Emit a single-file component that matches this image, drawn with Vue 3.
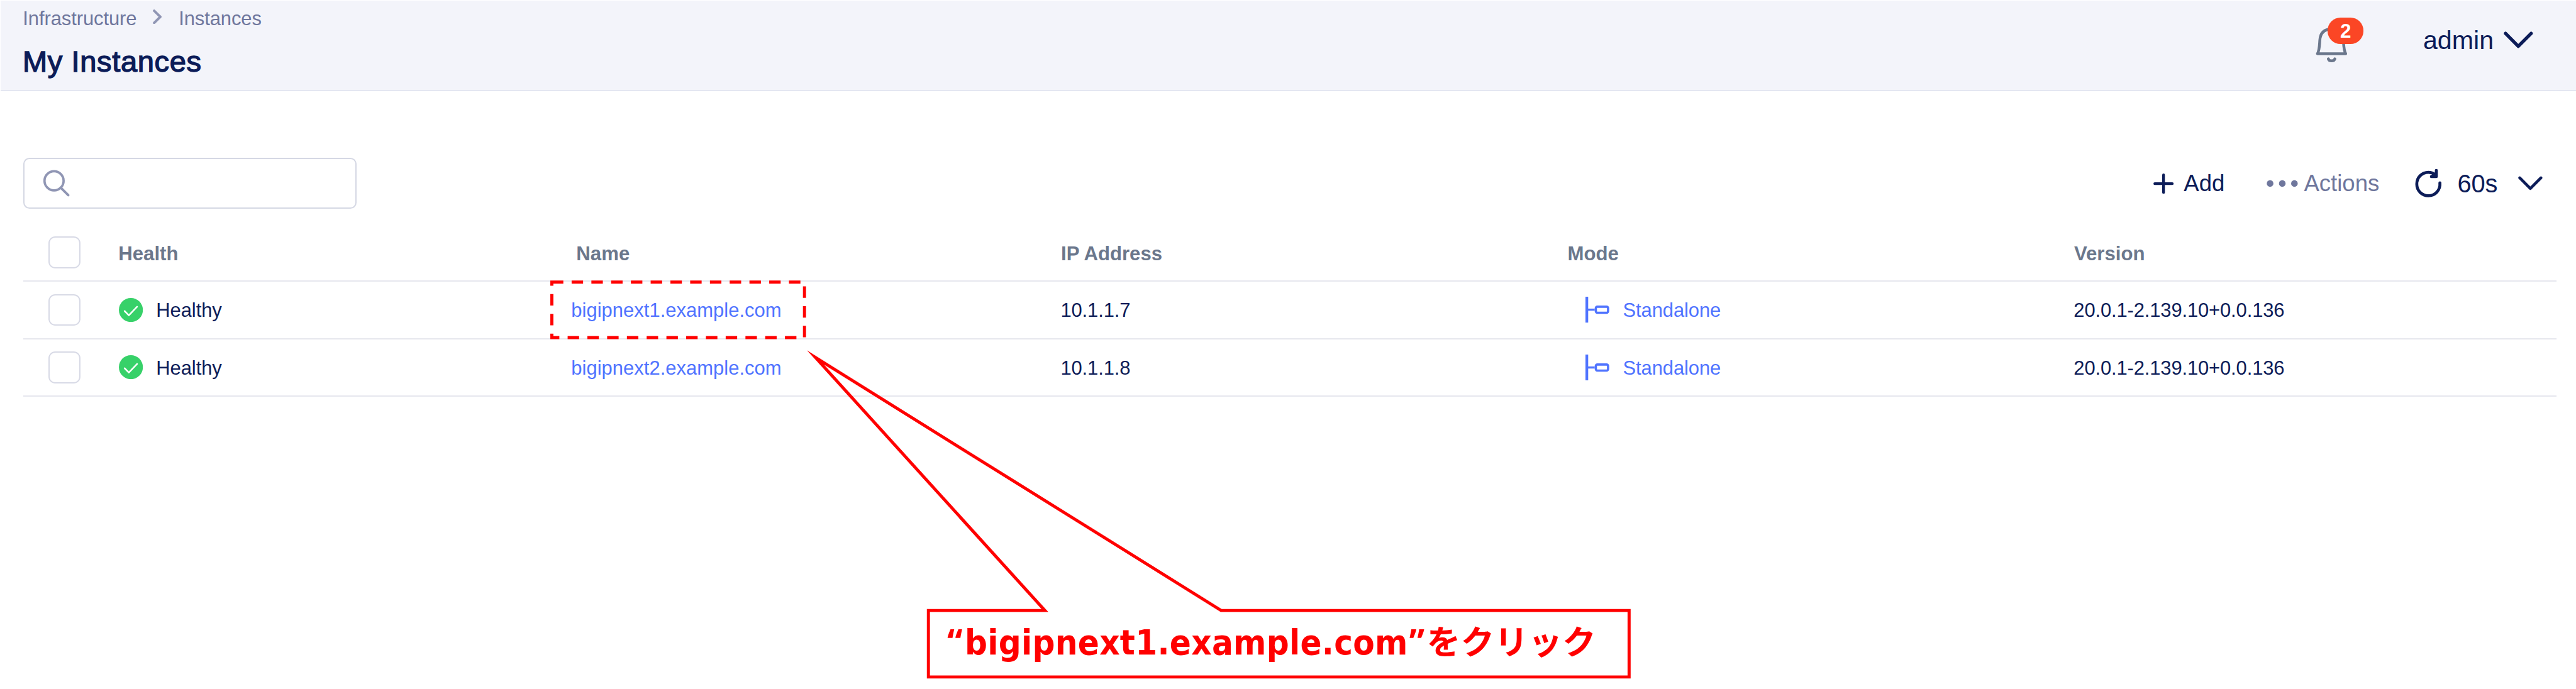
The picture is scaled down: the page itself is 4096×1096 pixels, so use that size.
<script setup>
const rows = [
  { health: 'Healthy', name: 'bigipnext1.example.com', ip: '10.1.1.7', mode: 'Standalone', version: '20.0.1-2.139.10+0.0.136' },
  { health: 'Healthy', name: 'bigipnext2.example.com', ip: '10.1.1.8', mode: 'Standalone', version: '20.0.1-2.139.10+0.0.136' }
]
</script>

<template>
  <div class="page">
    <header class="header">
      <div class="heading">
        <nav class="crumbs">
          <span class="crumb first">Infrastructure</span>
          <svg class="crumb-sep" width="15" height="24" viewBox="0 0 15 24">
            <path d="M2.2 2.2 L12.2 12 L2.2 21.8" fill="none" stroke="#9096b4" stroke-width="4" stroke-linecap="round" stroke-linejoin="round" />
          </svg>
          <span class="crumb">Instances</span>
        </nav>
        <h1 class="title">My Instances</h1>
      </div>
      <div class="bell">
        <svg width="52" height="60" viewBox="0 0 52 60" fill="none" stroke="#6b778c" stroke-width="4.6">
          <path d="M3 43.3 H48.8 C45.6 38 45.6 30 45 21.5 C44.2 9 37 3.3 25.9 3.3 C14.8 3.3 7.6 9 6.8 21.5 C6.2 30 6.2 38 3 43.3 Z" stroke-linejoin="round" />
          <path d="M20.6 51.6 C21.8 56 30 56 31.2 51.6" stroke-linecap="round" />
        </svg>
        <span class="badge">2</span>
      </div>
      <div class="user">
        <span class="user-name">admin</span>
        <svg width="48" height="28" viewBox="0 0 48 28">
          <path d="M3 3.2 L23.7 24.2 L44.6 3.2" fill="none" stroke="#0c1c58" stroke-width="5.4" stroke-linecap="round" stroke-linejoin="round" />
        </svg>
      </div>
    </header>

    <main class="content">
      <div class="toolbar">
        <div class="search">
          <svg width="43" height="44" viewBox="0 0 43 44" fill="none" stroke="#9096b4" stroke-width="3.8">
            <circle cx="17.3" cy="18" r="15.5" />
            <path d="M28.5 29.5 L40.3 41.2" stroke-width="4" stroke-linecap="round" />
          </svg>
        </div>
        <div class="tools">
          <svg class="plus" width="33" height="33" viewBox="0 0 33 33">
            <path d="M16.5 2.3 V30.7 M2.3 16.5 H30.7" stroke="#0c1c58" stroke-width="4.4" stroke-linecap="round" />
          </svg>
          <span class="add">Add</span>
          <svg class="dots" width="51" height="12" viewBox="0 0 51 12" fill="#6f779d">
            <circle cx="5.7" cy="6" r="5.4" /><circle cx="25.5" cy="6" r="5.4" /><circle cx="45.2" cy="6" r="5.4" />
          </svg>
          <span class="actions">Actions</span>
          <svg class="refresh" width="44" height="50" viewBox="0 0 44 50" fill="none" stroke="#0c1c58" stroke-width="4.8" stroke-linecap="round" stroke-linejoin="round">
            <path d="M40.4 24.3 C41.5 36 33 45.3 21.8 45.3 C11 45.3 2.9 37 2.9 26.3 C2.9 15.6 11 7.3 21.8 7.3 C26 7.3 29.6 8.7 32.6 11" />
            <path d="M34.6 4.3 V14.2 H26.6 L32.6 11" />
          </svg>
          <span class="interval">60s</span>
          <svg width="40" height="24" viewBox="0 0 40 24">
            <path d="M2.6 3 L19.8 20.2 L37 3" fill="none" stroke="#0c1c58" stroke-width="4.6" stroke-linecap="round" stroke-linejoin="round" />
          </svg>
        </div>
      </div>

      <div class="table">
        <div class="row head">
          <span class="cell check"><i class="box"></i></span>
          <span class="cell"><b>Health</b></span>
          <span class="cell head-name"><b>Name</b></span>
          <span class="cell"><b>IP Address</b></span>
          <span class="cell"><b>Mode</b></span>
          <span class="cell"><b>Version</b></span>
        </div>
        <div v-for="row in rows" :key="row.name" class="row">
          <span class="cell check"><i class="box"></i></span>
          <span class="cell health">
            <svg width="39" height="39" viewBox="0 0 39 39">
              <circle cx="19.5" cy="19.5" r="19.5" fill="#37d169" />
              <path d="M9.3 21.2 L16.2 28.2 L29.6 14.2" fill="none" stroke="#fff" stroke-width="2.6" stroke-linecap="round" stroke-linejoin="round" />
            </svg>
            <span class="text">{{ row.health }}</span>
          </span>
          <span class="cell"><a class="text link name">{{ row.name }}</a></span>
          <span class="cell"><span class="text">{{ row.ip }}</span></span>
          <span class="cell mode">
            <svg width="39" height="42" viewBox="0 0 39 42" fill="none" stroke="#4f73ff">
              <path d="M2.2 0 V42" stroke-width="4.4" />
              <path d="M4 21 H15" stroke-width="3.4" />
              <rect x="16.8" y="16.2" width="19.9" height="9.8" rx="2.4" stroke-width="3.7" />
            </svg>
            <a class="text link">{{ row.mode }}</a>
          </span>
          <span class="cell"><span class="text version">{{ row.version }}</span></span>
        </div>
      </div>
    </main>

    <svg class="annotation" width="4180" height="1118" viewBox="0 0 4180 1118" fill="none" stroke="#f00" stroke-width="5">
      <path d="M895.5 458 H1305.4 V548 H895.5 Z" stroke-dasharray="18.6 13.46" />
      <path d="M1506.5 991 H1695.5 L1323.3 580.4 L1981.5 991 H2643.5 V1099 H1506.5 Z" stroke-miterlimit="10" />
      <text class="note" x="1537" y="1062.7" fill="#f00" stroke="none"><tspan class="quote">“</tspan><tspan class="latin" dx="3.5">bigipnext1.example.com</tspan><tspan class="quote" dx="2">”</tspan><tspan class="kana" dx="3.5">をクリック</tspan></text>
    </svg>
  </div>
</template>

<style>
body {
  background: #fff;
}
</style>

<style scoped>
.page {
  position: relative;
  box-sizing: border-box;
  width: 4180px;
  height: 1118px;
  padding: 1px 0 0 1px;
  overflow: hidden;
  zoom: 0.979904;
  background: #fff;
  color: #0c1c58;
  font-family: "Liberation Sans", Arial, sans-serif;
  font-size: 31.6px;
  white-space: nowrap;
}

svg {
  display: block;
  flex: none;
}

.header {
  display: flex;
  box-sizing: border-box;
  height: 147px;
  background: #f3f4fa;
  border-bottom: 3px solid #e4e6f1;
}

.heading {
  flex: 1;
  padding: 9px 0 0 36px;
}

.crumbs {
  display: flex;
  height: 40px;
  line-height: 40px;
  color: #6f779d;
  letter-spacing: -0.08px;
}

.crumb.first {
  width: 211px;
}

.crumb-sep {
  margin: 5px 27px 0 0;
}

.title {
  margin: 20px 0 0 -0.3px;
  font-size: 48px;
  line-height: 60px;
  font-weight: 400;
  letter-spacing: 0.65px;
  -webkit-text-stroke: 1.4px #0c1c58;
}

.bell {
  position: relative;
  width: 174px;
  padding-top: 43px;
}

.badge {
  position: absolute;
  left: 19px;
  top: 28px;
  width: 58.5px;
  height: 42px;
  border-radius: 21px;
  background: #fb4625;
  color: #fff;
  font-size: 32px;
  font-weight: 700;
  line-height: 44px;
  text-align: center;
}

.user {
  display: flex;
  height: 129px;
  align-items: center;
  width: 248px;
}

.user-name {
  width: 131px;
  padding-top: 1px;
  font-size: 42px;
  line-height: 50px;
}

.content {
  padding: 108.3px 32px 0 36.5px;
}

.toolbar {
  display: flex;
  height: 83px;
  justify-content: space-between;
}

.search {
  display: flex;
  box-sizing: border-box;
  width: 541.5px;
  padding-left: 30.5px;
  align-items: center;
  border: 2.1px solid #d5d8e4;
  border-radius: 10px;
}

.tools {
  display: flex;
  align-items: center;
  padding-right: 21.5px;
  font-size: 37.3px;
}

.plus {
  margin-right: 16px;
}

.add {
  width: 134px;
  padding-top: 1px;
}

.dots {
  margin-right: 10px;
}

.actions {
  width: 180px;
  padding-top: 1px;
  color: #6f779d;
}

.refresh {
  margin-right: 25px;
}

.interval {
  width: 99px;
  padding-top: 1px;
  font-size: 40.6px;
}

.table {
  margin-top: 25.4px;
}

.row {
  display: grid;
  grid-template-columns: 154px 735.5px 794px 822px 822px 1fr;
  box-sizing: border-box;
  height: 93px;
  border-bottom: 3px solid #e6e7ee;
}

.cell {
  display: flex;
  align-items: center;
}

.cell b {
  padding: 3.5px 0 0 0.7px;
  color: #6b778c;
  font-size: 31.8px;
}

.check {
  padding-left: 41px;
}

.box {
  box-sizing: border-box;
  width: 52px;
  height: 52px;
  border: 2.1px solid #d8dae6;
  border-radius: 11px;
}

.text {
  padding-top: 3px;
  letter-spacing: -0.1px;
}

.name {
  letter-spacing: 0.02px;
}

.version {
  letter-spacing: -0.14px;
}

.health {
  padding-left: 1.5px;
}

.health .text {
  margin-left: 21.5px;
}

.head-name {
  padding-left: 7.5px;
}

.link {
  color: #4f73ff;
}

.mode {
  padding-left: 30px;
}

.mode .text {
  margin-left: 21.5px;
}

.annotation {
  position: absolute;
  left: 0;
  top: 0;
}

.note {
  font-size: 56px;
  font-weight: 700;
}

.quote {
  font-family: "Noto Sans", sans-serif;
}

.latin {
  font-family: "DejaVu Sans Condensed", "DejaVu Sans", Verdana, sans-serif;
  font-stretch: semi-condensed;
  font-size: 57px;
  letter-spacing: 0.3px;
}

.kana {
  font-family: "Noto Sans CJK JP", sans-serif;
  font-size: 55px;
}
</style>
